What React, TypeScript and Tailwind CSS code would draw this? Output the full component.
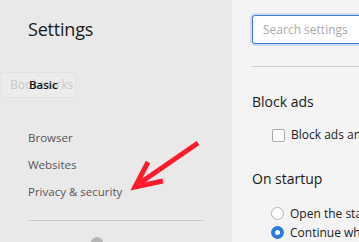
export default function App() {
  const navItems = ['Browser', 'Websites', 'Privacy & security'];

  return (
    <div
      className="relative flex h-[242px] w-[359px] overflow-hidden bg-[#f4f4f4] text-[#222]"
      style={{ fontFamily: '"Open Sans", "Noto Sans", sans-serif' }}
    >
      {/* sidebar */}
      <aside className="w-[232px] shrink-0 bg-[#e9e9e9]">
        <div className="pl-7 pt-[15px] text-[18px] leading-[28px] tracking-[-0.2px] text-[#1a1a1a]">
          Settings
        </div>

        <div className="relative mt-[29px] ml-[1px] h-[26px] w-[75px] rounded-[3px] border border-[#e2e2e2] bg-[#ececec]">
          <span className="absolute left-[8px] top-[4px] text-[12px] leading-[16px] text-[#c9c9c9]">
            Bookmarks
          </span>
          <span className="absolute left-[27px] top-[4px] text-[11.5px] font-semibold leading-[16px] text-[#111]">
            Basic
          </span>
        </div>

        <nav className="mt-[31px] flex flex-col gap-[9px] pl-7">
          {navItems.map((item) => (
            <div key={item} className="text-[11.5px] leading-[18px] text-[#555]">
              {item}
            </div>
          ))}
        </nav>

        <div className="ml-7 mt-[19px] h-px w-[176px] bg-[#c9c9c9]" />

        <div className="ml-[91px] mt-[16px] h-[12px] w-[12px] rounded-full bg-[#b5b5b5]" />
      </aside>

      {/* main */}
      <main className="flex flex-1 flex-col pl-5">
        <div className="mt-[15px] flex h-[29px] w-[140px] shrink-0 items-center rounded-[3px] border border-[#3a7bd5] bg-white pl-[10px] shadow-[0_0_0_2px_rgba(58,123,213,0.2)]">
          <span className="text-[12px] text-[#a9a9a9]">Search settings</span>
        </div>

        <div className="mt-[22px] h-px w-[120px] shrink-0 bg-[#cccccc]" />

        <div className="mt-[25px] text-[14px] font-medium leading-[20px] text-[#1a1a1a]">
          Block ads
        </div>

        <div className="mt-[14px] flex items-center gap-[6px] pl-[20px]">
          <span className="h-[13px] w-[13px] rounded-[2px] border border-[#adadad] bg-white" />
          <span className="whitespace-nowrap text-[12px] leading-[18px] text-[#222]">
            Block ads and block trackers
          </span>
        </div>

        <div className="mt-[25px] text-[14px] font-medium leading-[20px] text-[#1a1a1a]">
          On startup
        </div>

        <div className="mt-[18px] flex flex-col gap-[6px] pl-[19px]">
          <div className="flex items-center gap-[6px]">
            <span className="h-[13px] w-[13px] rounded-full border border-[#b3b3b3] bg-white" />
            <span className="whitespace-nowrap text-[12px] leading-[13px] text-[#222]">
              Open the start page
            </span>
          </div>
          <div className="flex items-center gap-[6px]">
            <span className="flex h-[13px] w-[13px] items-center justify-center rounded-full bg-[#2f7bd9]">
              <span className="h-[5px] w-[5px] rounded-full bg-white" />
            </span>
            <span className="whitespace-nowrap text-[12px] leading-[13px] text-[#222]">
              Continue where you left off
            </span>
          </div>
        </div>
      </main>

      {/* annotation arrow */}
      <svg
        className="pointer-events-none absolute left-0 top-0"
        width="359"
        height="242"
        viewBox="0 0 359 242"
      >
        <g stroke="#ff1b2d" strokeWidth="5" fill="none" strokeLinecap="butt" strokeLinejoin="miter">
          <line x1="198" y1="143" x2="137" y2="185" />
          <polyline points="148,162 135,187 163,181" />
        </g>
      </svg>
    </div>
  );
}
